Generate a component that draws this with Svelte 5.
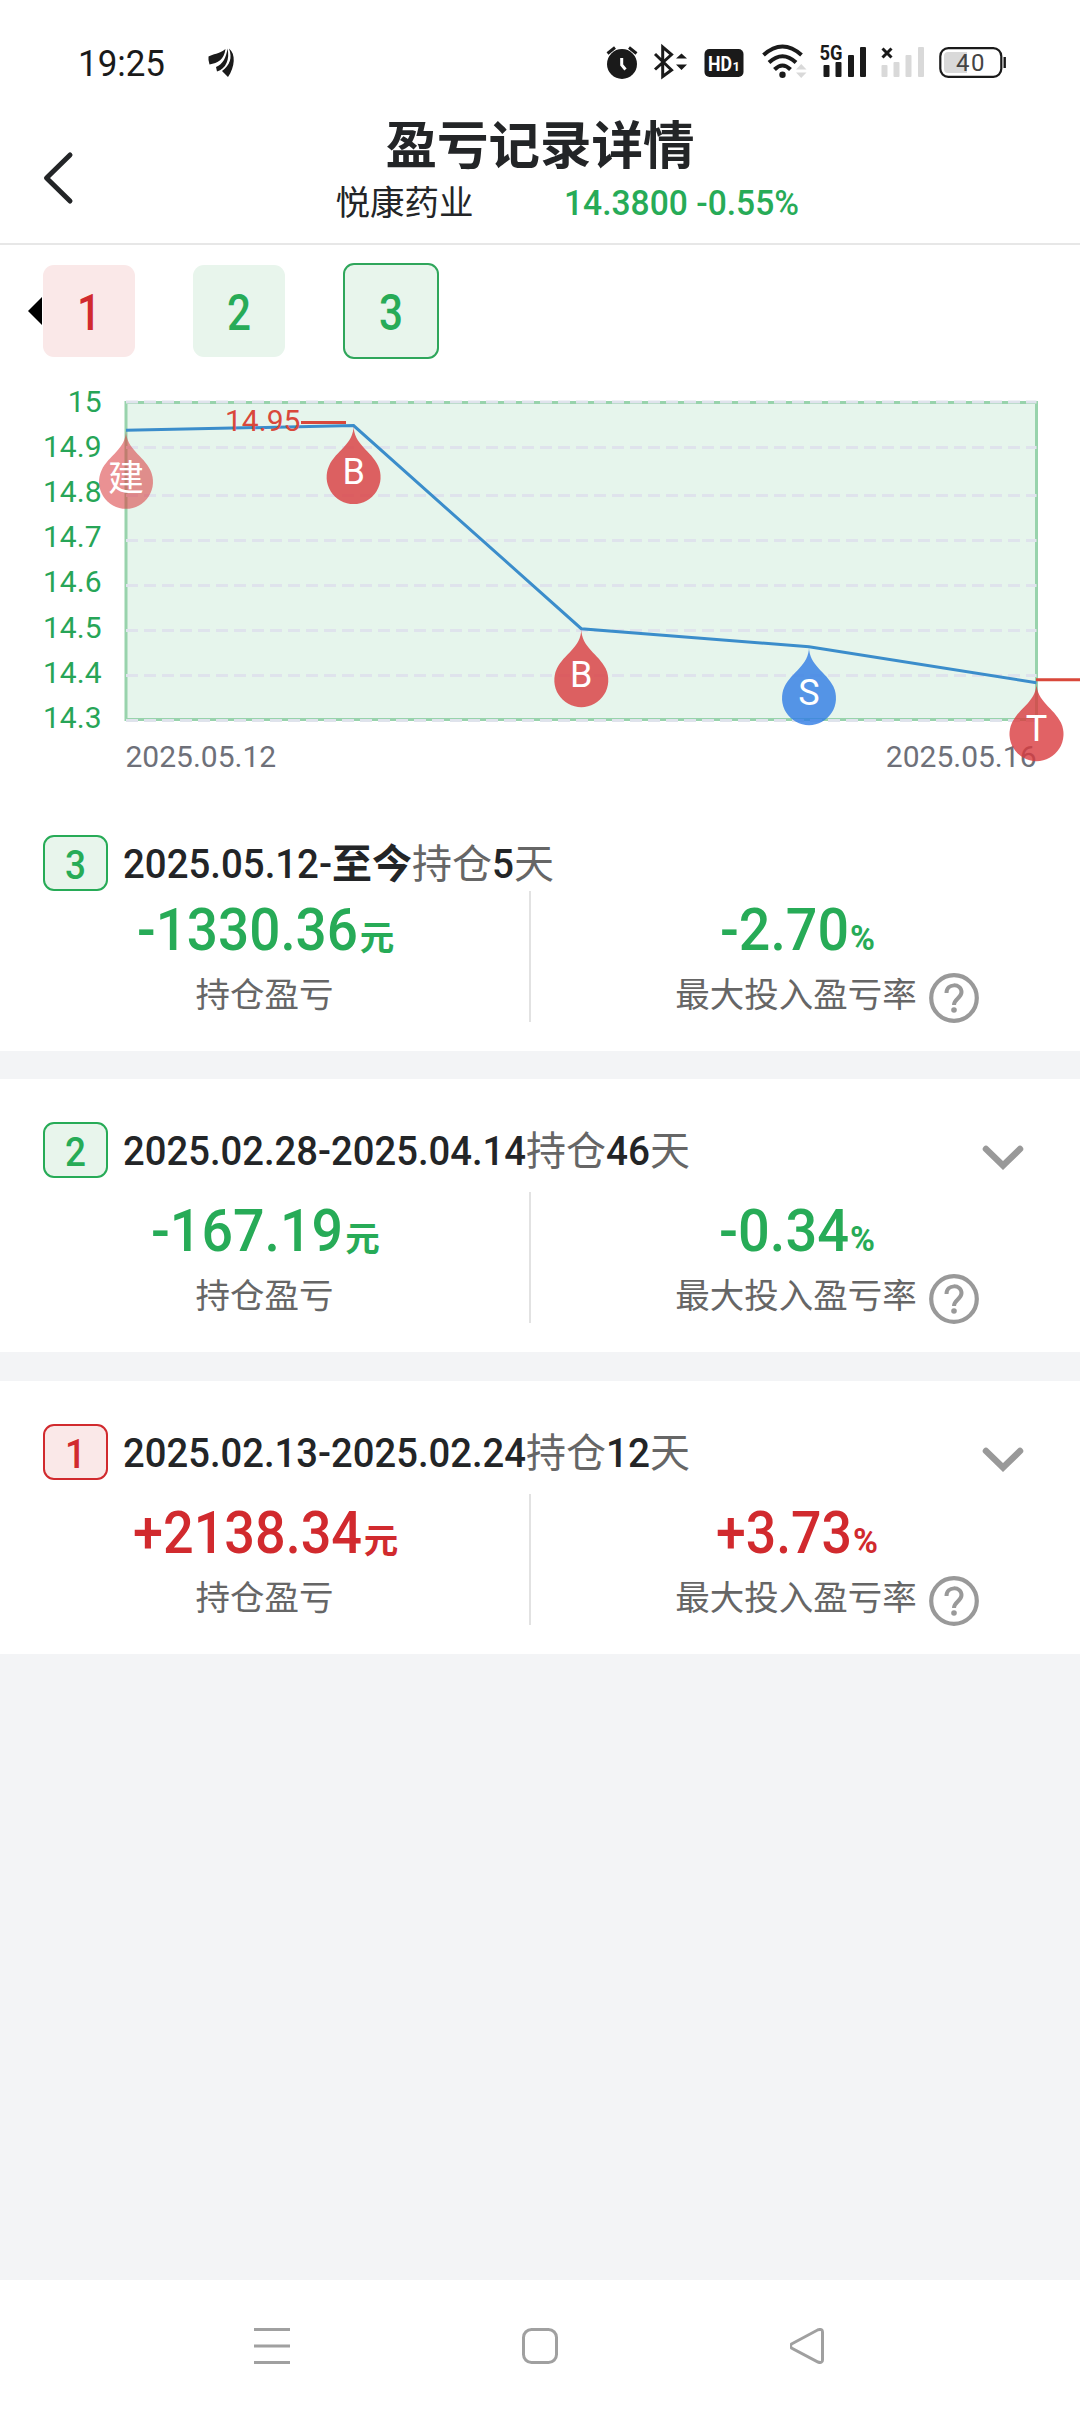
<script lang="ts">
  type Tone = 'gain' | 'loss';

  interface RecordItem {
    id: number;
    tone: Tone;
    range: string;
    rangeWidth: number;
    ongoing: boolean;
    days: string;
    profit: string;
    profitWidth: number;
    rate: string;
    rateWidth: number;
  }

  const records: RecordItem[] = [
    { id: 3, tone: 'loss', range: '2025.05.12-', rangeWidth: 209, ongoing: true, days: '5', profit: '-1330.36', profitWidth: 221, rate: '-2.70', rateWidth: 129 },
    { id: 2, tone: 'loss', range: '2025.02.28-2025.04.14', rangeWidth: 403, ongoing: false, days: '46', profit: '-167.19', profitWidth: 192, rate: '-0.34', rateWidth: 130 },
    { id: 1, tone: 'gain', range: '2025.02.13-2025.02.24', rangeWidth: 403, ongoing: false, days: '12', profit: '+2138.34', profitWidth: 229, rate: '+3.73', rateWidth: 136 }
  ];

  const tabs: { id: number; tone: Tone }[] = [
    { id: 1, tone: 'gain' },
    { id: 2, tone: 'loss' },
    { id: 3, tone: 'loss' }
  ];
  let active = $state(3);

  // chart geometry, origin at the top left of the chart block
  const left = 126;
  const right = 1036.5;
  const top = 37.5;
  const bottom = 354.5;

  const ticks = [
    { label: '15', y: 37, base: 47 },
    { label: '14.9', y: 82.5, base: 92 },
    { label: '14.8', y: 130.5, base: 137 },
    { label: '14.7', y: 175.5, base: 182 },
    { label: '14.6', y: 220.5, base: 227 },
    { label: '14.5', y: 265.5, base: 273 },
    { label: '14.4', y: 310.5, base: 318 },
    { label: '14.3', y: 355.5, base: 363 }
  ];

  const points = [
    { x: 126, y: 65.3, mark: '建', markY: 60.5, color: '#da3b3f', opacity: 0.56 },
    { x: 353.6, y: 60.6, mark: 'B', markY: 58.2, color: '#da3b3f', opacity: 0.8 },
    { x: 581.3, y: 263.7, mark: 'B', markY: 58.2, color: '#da3b3f', opacity: 0.8 },
    { x: 809, y: 281.7, mark: 'S', markY: 58.2, color: '#307ce5', opacity: 0.8 },
    { x: 1036.5, y: 317.7, mark: 'T', markY: 58.2, color: '#da3b3f', opacity: 0.8 }
  ];
  const line = points.map((p) => `${p.x},${p.y}`).join(' ');
</script>

{#snippet num(text: string, width: number, size: number)}
  <svg class="num" {width} height={size * 0.72}>
    <text x="0" y={size * 0.72} font-size={size} textLength={width} lengthAdjust="spacingAndGlyphs">{text}</text>
  </svg>
{/snippet}

<div class="screen">
  <div class="status">
    <svg width="1080" height="100" viewBox="0 0 1080 100">
      <text x="78" y="75.500" font-size="37.500" textLength="87" lengthAdjust="spacingAndGlyphs" fill="#1a1a1a">19:25</text>
      <g fill="#1a1a1a">
        <path d="M225.500 49C219 54 213 54 208.500 56.500Q208 60 209.500 64.500C218 63 224 60 225.500 49Z" />
        <path d="M227.500 48.500C226 58 223 64 216 67L217 71.500C226 69 230 59 227.500 48.500Z" />
        <path d="M229 48.500C236 54 235 67 228 77L222 71C230 65 232.500 58 229 48.500Z" />
      </g>

      <circle cx="622" cy="64" r="15" fill="#1a1a1a" />
      <path d="M607.500 53.500L615 47.500M636.500 53.500L629 47.500" stroke="#1a1a1a" stroke-width="3" />
      <path d="M621.700 58V65L625.500 69.500" fill="none" stroke="#fff" stroke-width="3" />

      <path d="M655 54L671.500 70L662.700 76.500V47L671.500 54.500L655 69.500" fill="none" stroke="#1a1a1a" stroke-width="3" />
      <path d="M676 58.500H687L681.500 53.500ZM676 64.500H687L681.500 70Z" fill="#1a1a1a" />

      <rect x="704.500" y="49" width="39" height="28" rx="5" fill="#1a1a1a" />
      <text x="708" y="71" font-size="21" font-weight="700" textLength="24" lengthAdjust="spacingAndGlyphs" fill="#fff">HD</text>
      <text x="732.500" y="71" font-size="13" font-weight="700" fill="#fff">1</text>

      <g fill="none" stroke="#1a1a1a" stroke-width="4">
        <path d="M763.500 55Q782.500 38 801.500 55" />
        <path d="M769 62.500Q782.500 50 796 62.500" />
        <path d="M774.500 69.500Q782.500 61.500 790.500 69.500" />
      </g>
      <circle cx="782.500" cy="74.700" r="3.200" fill="#1a1a1a" />
      <path d="M796 69.500H806.500L801.200 64ZM796 72.500H806.500L801.200 78Z" fill="#d9d9d9" />

      <text x="819.500" y="60" font-size="21" font-weight="700" textLength="23" lengthAdjust="spacingAndGlyphs" fill="#1a1a1a">5G</text>
      <g fill="#1a1a1a">
        <rect x="823.500" y="65" width="6" height="12" rx="1" />
        <rect x="835.500" y="62" width="6" height="15" rx="1" />
        <rect x="848" y="55" width="6" height="22" rx="1" />
        <rect x="860" y="47" width="6" height="30" rx="1" />
      </g>
      <path d="M882.500 48.500L891.500 57.500M891.500 48.500L882.500 57.500" stroke="#1a1a1a" stroke-width="3" />
      <g fill="#d9d9d9">
        <rect x="881.500" y="65" width="6" height="12" rx="1" />
        <rect x="893.500" y="62" width="6" height="15" rx="1" />
        <rect x="905.500" y="55" width="6" height="22" rx="1" />
        <rect x="918" y="47" width="6" height="30" rx="1" />
      </g>

      <rect x="940.300" y="48.200" width="61" height="28.600" rx="8" fill="none" stroke="#1a1a1a" stroke-width="2.200" />
      <path d="M948 52H967V73H948Q944 73 944 69V56Q944 52 948 52Z" fill="#d9d9d9" />
      <path d="M1004.700 57V68" stroke="#1a1a1a" stroke-width="2.400" />
      <text x="956" y="71" font-size="24" textLength="28.500" fill="#444">40</text>
    </svg>
  </div>

  <header>
    <svg class="back" width="32" height="54" viewBox="0 0 32 54">
      <path d="M28 4L4.500 27L28 50" fill="none" stroke="#232527" stroke-width="5" stroke-linecap="round" stroke-linejoin="round" />
    </svg>
    <h1>盈亏记录详情</h1>
    <div class="quote">
      <span class="name">悦康药业</span>
      <span class="price">{@render num('14.3800 -0.55%', 235, 34.5)}</span>
    </div>
  </header>

  <div class="tabs">
    <i class="arrow"></i>
    {#each tabs as tab}
      <button class="tab {tab.tone}" class:active={active === tab.id} onclick={() => (active = tab.id)}>
        {@render num(String(tab.id), 24, 50)}
      </button>
    {/each}
  </div>

  <svg class="chart" width="1080" height="435" viewBox="0 0 1080 435">
    <rect x={left} y={top} width={right - left} height={bottom - top} fill="#e6f5ec" stroke="#98d3ac" stroke-width="3" />
    {#each ticks as tick}
      <line x1={left} x2={right} y1={tick.y} y2={tick.y} stroke="#dfe3ec" stroke-width="3" stroke-dasharray="12 6" />
      <text x="101.500" y={tick.base} text-anchor="end" fill="#27a557">{tick.label}</text>
    {/each}
    <text x="125.500" y="401.500" fill="#6e7079">2025.05.12</text>
    <text x="1036.500" y="401.500" text-anchor="end" fill="#6e7079">2025.05.16</text>
    <polyline points={line} fill="none" stroke="#3b8dcb" stroke-width="3" />
    <text x="225" y="65.500" fill="#d9483b">14.95</text>
    <path d="M301 57.500H346M1036 314.800H1080" stroke="#d9483b" stroke-width="3" />
    {#each points as p}
      <g transform="translate({p.x} {p.y})">
        <path
          d="M-24.400 39.900A27 27 0 1 0 24.400 39.900C17.500 25.200 0 18.900 0 0C0 18.900 -17.500 25.200 -24.400 39.900Z"
          fill={p.color}
          fill-opacity={p.opacity}
        />
        <text class="mark" y={p.markY} text-anchor="middle" fill="#fff">{p.mark}</text>
      </g>
    {/each}
  </svg>

  {#each records as r}
    <section class={r.tone} class:current={r.ongoing}>
      <div class="head">
        <span class="badge">{@render num(String(r.id), 21, 40.5)}</span>
        <p class="range">
          {@render num(r.range, r.rangeWidth, 41)}{#if r.ongoing}<b>至今</b>{/if}<span>持仓</span>{@render num(r.days, r.days.length * 22, 41)}<span>天</span>
        </p>
        {#if !r.ongoing}
          <svg class="toggle" width="42" height="26" viewBox="0 0 42 26">
            <path d="M4 4L21 20.500L38 4" fill="none" stroke="#999" stroke-width="6.500" stroke-linecap="round" />
          </svg>
        {/if}
      </div>
      <div class="stats">
        <div class="stat">
          <div class="value">{@render num(r.profit, r.profitWidth, 59)}<small>元</small></div>
          <div class="label">持仓盈亏</div>
        </div>
        <div class="stat">
          <div class="value">{@render num(r.rate, r.rateWidth, 59)}<span class="percent">{@render num('%', 25, 35)}</span></div>
          <div class="label">
            最大投入盈亏率
            <svg class="help" width="50" height="50" viewBox="0 0 50 50" fill="none" stroke="#999">
              <circle cx="25" cy="25" r="22.800" stroke-width="4.200" />
              <path d="M17.500 20C17.500 10 32.500 10 32.500 19C32.500 25 25 26 25 32" stroke-width="4" />
              <circle cx="25" cy="37" r="2.800" fill="#999" stroke="none" />
            </svg>
          </div>
        </div>
      </div>
    </section>
  {/each}

  <nav>
    <svg width="36" height="36" viewBox="0 0 36 36">
      <path d="M0 1.500H36M0 18H36M0 34.500H36" />
    </svg>
    <svg width="36" height="36" viewBox="0 0 36 36">
      <rect x="1.500" y="1.500" width="33" height="33" rx="8" />
    </svg>
    <svg width="36" height="36" viewBox="0 0 36 36">
      <path d="M1.500 16L28 1.800Q32.500 0.500 32.500 4V32Q32.500 35.500 28 34L1.500 20Q-0.500 18 1.500 16Z" />
    </svg>
  </nav>
</div>

<style>
  :global(body) {
    background: #f3f4f6;
  }

  .screen {
    display: flex;
    flex-direction: column;
    width: 1080px;
    height: 2412px;
    background: #f3f4f6;
    font-family: Roboto, 'Noto Sans CJK SC', sans-serif;
    color: #232527;
    overflow: hidden;
  }

  svg {
    display: block;
  }

  .num {
    display: inline-block;
    overflow: visible;
    fill: currentColor;
    font-weight: 500;
  }

  .status {
    height: 100px;
    background: #fff;
  }

  header {
    position: relative;
    box-sizing: border-box;
    height: 145px;
    padding-top: 16px;
    background: #fff;
    border-bottom: 2px solid #e7e7e7;
    text-align: center;
  }

  .back {
    position: absolute;
    left: 42px;
    top: 51px;
  }

  h1 {
    margin: 0;
    font-size: 51.5px;
    line-height: 62px;
    font-weight: 700;
  }

  .quote {
    display: flex;
    align-items: baseline;
    justify-content: center;
    gap: 90px;
    height: 50px;
    padding-left: 54px;
    line-height: 50px;
    font-size: 34.5px;
  }

  .price,
  .loss {
    color: #27ab57;
  }

  .gain {
    color: #d12a2e;
  }

  .tabs {
    display: flex;
    align-items: center;
    box-sizing: border-box;
    height: 120px;
    padding: 11px 0 0 28px;
    background: #fff;
  }

  .arrow {
    width: 0;
    margin-right: 1px;
    border: 14px solid transparent;
    border-left: 0;
    border-right-color: #000;
  }

  .tab {
    display: flex;
    align-items: center;
    justify-content: center;
    box-sizing: border-box;
    width: 92px;
    height: 92px;
    margin-right: 58px;
    padding: 3px 0 0;
    border: 0;
    border-radius: 11px;
    background: #e8f5ec;
    font-family: inherit;
  }

  .tab.gain {
    background: #fae8e8;
  }

  .tab.active {
    width: 96px;
    height: 96px;
    border: 2px solid #2fa65b;
  }

  .chart {
    flex: none;
    background: #fff;
    font-size: 30px;
  }

  .mark {
    font-size: 36px;
  }

  section {
    box-sizing: border-box;
    height: 273px;
    margin-bottom: 29px;
    padding-top: 43px;
    background: #fff;
  }

  section.current {
    height: 251px;
    padding-top: 35px;
    margin-bottom: 28px;
  }

  .head {
    display: flex;
    align-items: center;
    height: 56px;
    padding: 0 56px 0 43px;
  }

  .badge {
    display: flex;
    align-items: center;
    justify-content: center;
    box-sizing: border-box;
    width: 65px;
    height: 56px;
    padding-top: 3px;
    border: 2px solid currentColor;
    border-radius: 11px;
    background: #e8f5ec;
  }

  .gain .badge {
    background: #fae8e8;
  }

  .range {
    margin: 3px auto 0 15px;
    font-size: 40px;
    line-height: 56px;
    color: #232527;
    white-space: nowrap;
  }

  .range span {
    color: #666;
  }

  .toggle {
    margin-top: 16px;
  }

  .stats {
    display: flex;
    height: 131px;
    margin-top: 14px;
  }

  .current .stats {
    margin-top: 0;
  }

  .stat {
    width: 529px;
  }

  .stat + .stat {
    width: 530px;
    border-left: 2px solid #e2e2e2;
  }

  .value {
    display: flex;
    align-items: baseline;
    justify-content: center;
    box-sizing: border-box;
    height: 79px;
    padding: 17px 0 0 2px;
    line-height: 34px;
  }

  .value small {
    margin-left: 2px;
    font-size: 34.5px;
    font-weight: 700;
  }

  .percent {
    margin-left: 1px;
  }

  .percent .num {
    font-weight: 700;
  }

  .label {
    position: relative;
    width: fit-content;
    margin: 0 auto;
    font-size: 34.5px;
    line-height: 50px;
    color: #666;
  }

  .help {
    position: absolute;
    left: calc(100% + 12px);
    top: 3px;
  }

  nav {
    display: flex;
    align-items: center;
    justify-content: center;
    gap: 232px;
    box-sizing: border-box;
    height: 132px;
    margin-top: auto;
    background: #fff;
  }

  nav svg {
    fill: none;
    stroke: #a0a0a0;
    stroke-width: 3;
  }
</style>
